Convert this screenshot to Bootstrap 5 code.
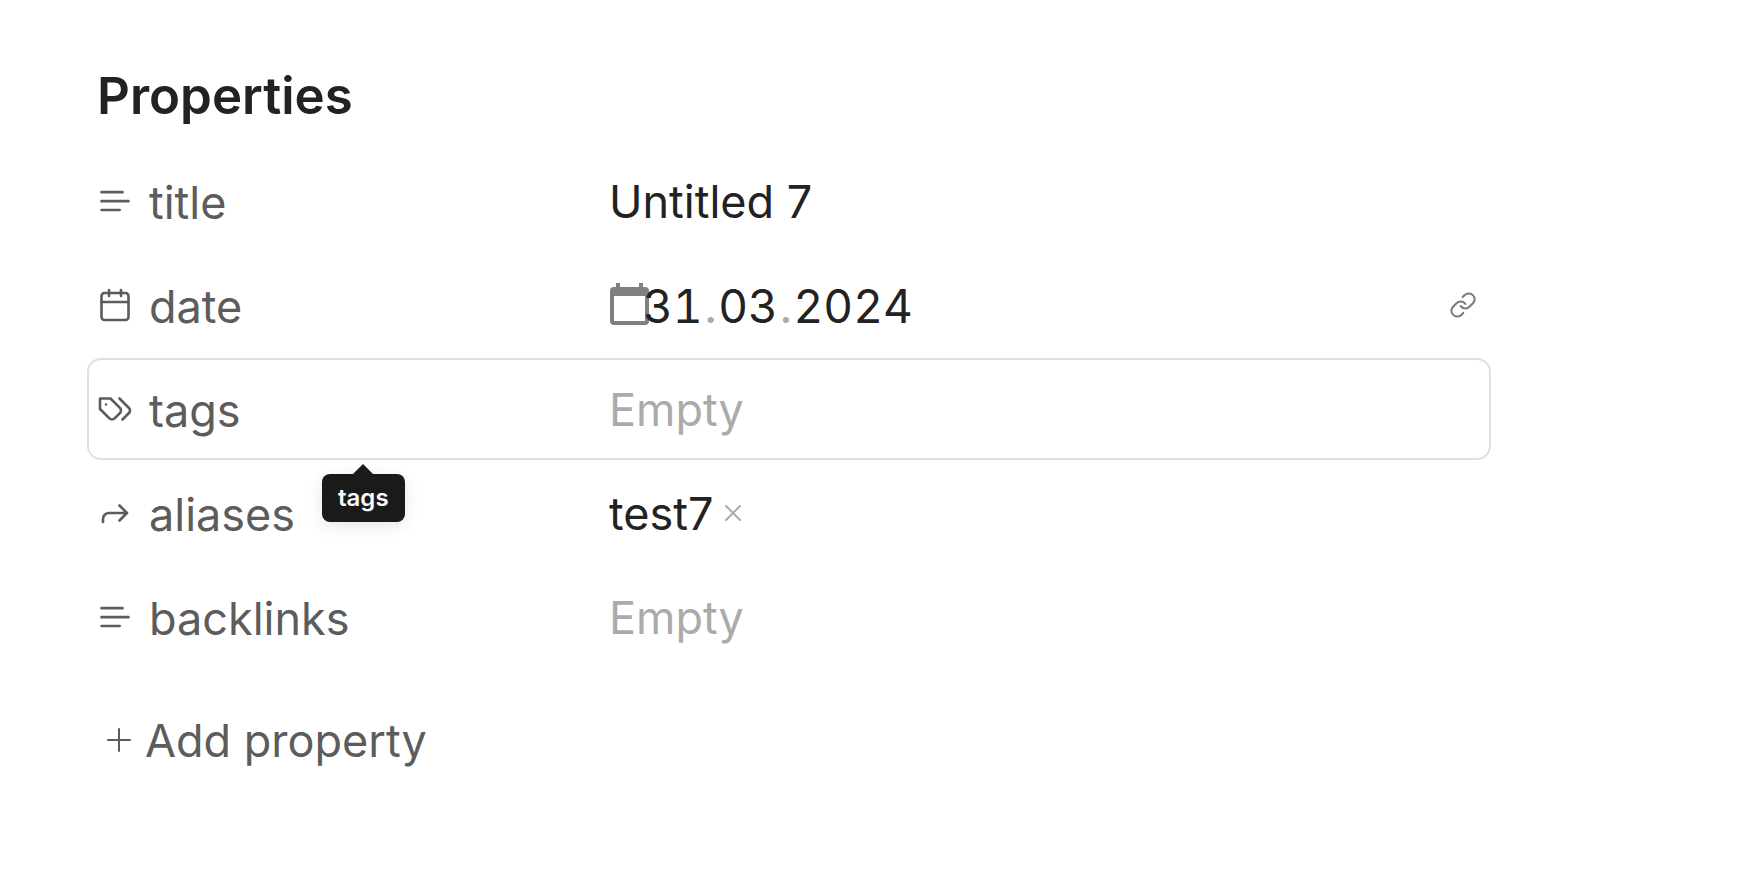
<!DOCTYPE html>
<html lang="en">
<head>
<meta charset="utf-8">
<meta name="viewport" content="width=device-width, initial-scale=1">
<title>Properties</title>
<link href="https://cdn.jsdelivr.net/npm/bootstrap@5.3.0/dist/css/bootstrap.min.css" rel="stylesheet">
<style>
  body { font-family: Inter, "Open Sans", sans-serif; font-size: 45px; line-height: 60px; color: #222; background: #fff; }
  .properties { padding: 62px 261px 62px 87px; }
  .prop-heading { font-size: 51px; line-height: 68px; font-weight: 600; color: #222; margin: 0 0 20px 10px; }
  .prop-list { display: grid; gap: 2px; }
  .prop-row { min-height: 102px; padding-top: 2px; border: 2px solid transparent; border-radius: 14px; }
  .prop-row.is-active { border-color: #e0e0e0; }
  .prop-key { flex: 0 0 520px; padding: 2px 0 0 8px; gap: 16px; color: #5c5c5c; }
  .prop-icon { width: 36px; height: 36px; flex: none; margin-bottom: 4px; }
  svg { display: block; fill: none; stroke: currentColor; stroke-width: 1.75; stroke-linecap: round; stroke-linejoin: round; }
  .prop-input { border: 0; padding: 0; background: transparent; color: #222; height: 60px; outline: 0; min-width: 0; }
  .prop-input::placeholder { color: #ababab; opacity: 1; }
  .plain-btn { border: 0; padding: 0; background: transparent; color: #5c5c5c; }
  .date-field { font-size: 46px; padding-left: 1px; }
  .date-icon { width: 39px; color: #808080; margin: 0 -6px 4px 0; }
  .date-part { width: 60px; font-variant-numeric: tabular-nums; }
  .date-year { width: 122px; }
  .date-dot { color: #ababab; padding: 0 1px; }
  .link-btn { color: #7a7a7a; margin: 0 12px 2px 0; }
  .chip-x { color: #ababab; margin-bottom: 2px; }
  .key-tip { left: 233px; top: 114px; z-index: 2; padding: 8px 16px; border-radius: 8px; background: #1a1a1a; color: #fafafa; font-size: 24px; line-height: 32px; font-weight: 600; box-shadow: 0 4px 16px rgba(0,0,0,.1); }
  .key-tip::before { content: ""; position: absolute; left: 50%; top: -10px; margin-left: -10px; border: 10px solid transparent; border-top: 0; border-bottom-color: #1a1a1a; }
  .add-btn { margin: 31px 0 0 18px; gap: 12px; padding: 12px 0; }
</style>
</head>
<body>
<main class="properties">
  <h1 class="prop-heading">Properties</h1>
  <div class="prop-list">
    <div class="prop-row d-flex align-items-center">
      <label class="prop-key d-flex align-items-center" for="p-title">
        <svg class="prop-icon" viewBox="0 0 24 24"><path d="M17 6.100H3M21 12.100H3M15.100 18H3"/></svg>title</label>
      <input class="prop-input flex-grow-1" id="p-title" type="text" value="Untitled 7">
    </div>
    <div class="prop-row d-flex align-items-center">
      <label class="prop-key d-flex align-items-center" for="p-day">
        <svg class="prop-icon" viewBox="0 0 24 24"><rect x="3" y="4" width="18" height="18" rx="2"/><path d="M16 2v4M8 2v4M3 10h18"/></svg>date</label>
      <div class="date-field d-flex align-items-center flex-grow-1">
        <button class="plain-btn date-icon" type="button" aria-label="Open calendar"><svg width="39" height="42" viewBox="0 0 39 42"><path fill="currentColor" fill-rule="evenodd" stroke="none" d="M6 0h4v4h19V0h4v4h2q4 0 4 4v30q0 4-4 4H4q-4 0-4-4V8q0-4 4-4h2zM4 13v25h31V13z"/></svg></button>
        <input class="prop-input date-part" id="p-day" type="text" inputmode="numeric" value="31">
        <span class="date-dot">.</span>
        <input class="prop-input date-part" type="text" inputmode="numeric" value="03" aria-label="Month">
        <span class="date-dot">.</span>
        <input class="prop-input date-part date-year" type="text" inputmode="numeric" value="2024" aria-label="Year">
      </div>
      <a class="link-btn" href="#" aria-label="Open daily note"><svg width="28" height="28" viewBox="0 0 24 24"><path d="M10 13a5 5 0 0 0 7.540.540l3-3a5 5 0 0 0-7.070-7.070l-1.720 1.710M14 11a5 5 0 0 0-7.540-.540l-3 3a5 5 0 0 0 7.070 7.070l1.710-1.710"/></svg></a>
    </div>
    <div class="prop-row is-active position-relative d-flex align-items-center">
      <label class="prop-key d-flex align-items-center" for="p-tags">
        <svg class="prop-icon" viewBox="0 0 24 24"><path d="M9 5H2v7l6.290 6.290c.940.940 2.480.940 3.420 0l3.580-3.580c.940-.940.940-2.480 0-3.420L9 5ZM6 9.010V9M15 5l6.300 6.300a2.400 2.400 0 0 1 0 3.400L17 19"/></svg>tags</label>
      <input class="prop-input flex-grow-1" id="p-tags" type="text" placeholder="Empty">
      <div class="key-tip position-absolute" role="tooltip">tags</div>
    </div>
    <div class="prop-row d-flex align-items-center">
      <div class="prop-key d-flex align-items-center">
        <svg class="prop-icon" viewBox="0 0 24 24"><path d="m15 7 5 5-5 5M4 18v-2a4 4 0 0 1 4-4h12"/></svg>aliases</div>
      <div class="d-flex align-items-center gap-2">
        <span>test7</span>
        <button class="plain-btn chip-x" type="button" aria-label="Remove test7"><svg width="24" height="24" viewBox="0 0 24 24"><path stroke-width="2" d="M5 5l14 14M19 5L5 19"/></svg></button>
      </div>
    </div>
    <div class="prop-row d-flex align-items-center">
      <label class="prop-key d-flex align-items-center" for="p-backlinks">
        <svg class="prop-icon" viewBox="0 0 24 24"><path d="M17 6.100H3M21 12.100H3M15.100 18H3"/></svg>backlinks</label>
      <input class="prop-input flex-grow-1" id="p-backlinks" type="text" placeholder="Empty">
    </div>
  </div>
  <button class="plain-btn add-btn d-flex align-items-center" type="button">
    <svg width="28" height="28" viewBox="0 0 28 28"><path stroke-width="2" d="M3 13h22M14 2v22"/></svg>Add property</button>
</main>
<script src="https://cdn.jsdelivr.net/npm/bootstrap@5.3.0/dist/js/bootstrap.bundle.min.js"></script>
</body>
</html>
